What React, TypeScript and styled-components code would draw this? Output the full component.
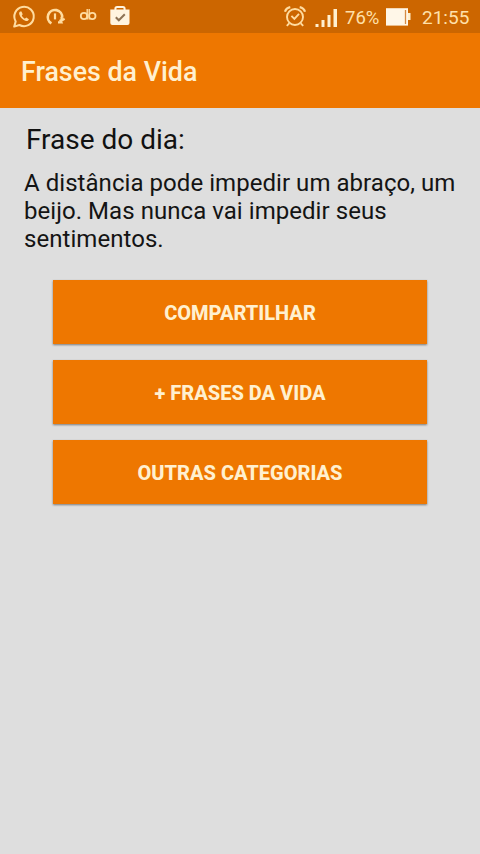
import React from "react";
import styled, { createGlobalStyle } from "styled-components";

const GlobalStyle = createGlobalStyle`
  * { box-sizing: border-box; }
  html, body { margin: 0; padding: 0; background: #dedede; }
  body { font-family: Roboto, "Liberation Sans", sans-serif; }
`;

const cream = "#fff0cf";

const Screen = styled.div`
  width: 100%;
  height: 854px;
  display: flex;
  flex-direction: column;
  background: #dedede;
  overflow: hidden;
`;

const StatusBar = styled.header`
  height: 33px;
  flex: none;
  display: flex;
  justify-content: space-between;
  background: #cc6600;
  color: #ffe0aa;
`;

const StatusIcons = styled.div`
  display: flex;
  height: 33px;
`;

const StatusText = styled.span<{ $width: number; $size: number }>`
  width: ${(p) => p.$width}px;
  font-size: ${(p) => p.$size}px;
  line-height: 36px;
  white-space: nowrap;
`;

const TitleBar = styled.div`
  height: 75px;
  flex: none;
  display: flex;
  align-items: center;
  padding: 3px 0 0 21px;
  background: #ee7700;
`;

const Title = styled.h1`
  margin: 0;
  font-size: 26.8px;
  line-height: 32px;
  font-weight: 500;
  color: ${cream};
`;

const Content = styled.main`
  display: flex;
  flex-direction: column;
  padding: 15px 12px 0 24px;
`;

const Heading = styled.h2`
  margin: 0 0 12px 2px;
  font-size: 28px;
  line-height: 34px;
  font-weight: 400;
  color: #111;
`;

const Quote = styled.p`
  margin: 0;
  font-size: 24px;
  line-height: 28px;
  letter-spacing: 0.05px;
  color: #141414;
`;

const Actions = styled.div`
  display: flex;
  flex-direction: column;
  gap: 16px;
  padding: 27px 41px 0 29px;
`;

const ActionButton = styled.button`
  height: 64px;
  padding: 2px 0 0;
  border: 0;
  background: #ee7700;
  box-shadow: 0 1px 2px rgba(0, 0, 0, 0.45);
  color: ${cream};
  font-family: inherit;
  font-size: 20px;
  line-height: 24px;
  font-weight: 800;
  text-transform: uppercase;
`;

const NotificationIcons = () => (
  <svg width="140" height="33" viewBox="0 0 140 33" fill="none" stroke="#ffdca0">
    <path d="M14.2 26.6l1.5-5.2a9.7 9.7 0 1 1 3.7 3.6z" strokeWidth="2" strokeLinejoin="round" />
    <path
      d="M20.2 11.4c-1 .6-1.3 1.7-.9 3.1 1.1 3.2 3.5 5.4 6.6 6.4 1.4.4 2.6-.3 3-1.7l-2.6-1.7-1.5 1.2c-1.4-.7-2.4-1.7-3-3.1l.9-1.3-1.2-2.8z"
      fill="#ffdca0"
      stroke="none"
    />
    <path d="M51.4 23.4A7.2 7.2 0 1 1 62.2 17.6" strokeWidth="2.6" />
    <path d="M55 13.4v6" strokeWidth="2.2" />
    <path d="M61.6 17v3.6l3-1.8M58 22.4h3.4l-1.4-2.8" strokeWidth="2.2" />
    <circle cx="84" cy="16" r="3.2" strokeWidth="1.8" />
    <circle cx="92.3" cy="16" r="3.2" strokeWidth="1.8" />
    <path d="M87.2 9v10.4M89.2 9v10.4" strokeWidth="1.4" />
    <path d="M115.4 10V8.7q0-1.7 1.7-1.7h5.8q1.7 0 1.7 1.7V10" stroke="#fff4df" strokeWidth="2" />
    <path d="M110.3 9.5h19.2V23q0 2-2 2h-15.2q-2 0-2-2z" fill="#fff4df" stroke="none" />
    <path d="M115.8 17.3l3 3 6-6" stroke="#8d7355" strokeWidth="2" />
  </svg>
);

const AlarmIcon = () => (
  <svg width="28" height="33" viewBox="1 0 28 33" fill="none" stroke="#ffdca0" strokeWidth="1.9">
    <circle cx="12" cy="17" r="8" />
    <path d="M2 11.8Q3 8 7.3 7.1M16.7 7.1Q21 8 22 11.8" strokeWidth="2.2" />
    <path d="M6.2 23.4l-2.4 2.5M17.8 23.4l2.4 2.5M8.4 15.8l3 3 4.6-5" />
  </svg>
);

const SignalIcon = () => (
  <svg width="33" height="33" viewBox="0 0 33 33" fill="#fff0cf">
    <path d="M3.5 24h3v3h-3zM9.5 20h3v7h-3zM15.5 15h3v12h-3zM21.5 9h3.5v18h-3.5z" />
  </svg>
);

const BatteryIcon = () => (
  <svg width="36" height="33" viewBox="1 0 36 33" fill="none">
    <path d="M1 8.2h22v17.4H1z" fill="#fff7e8" />
    <path d="M20.5 10v14" stroke="#d68b43" strokeWidth="1.3" />
    <path d="M23 13h2.5v7H23z" fill="#fff0cf" />
  </svg>
);

const actions = ["Compartilhar", "+ Frases da Vida", "Outras categorias"];

export default function App() {
  return (
    <>
      <GlobalStyle />
      <Screen>
        <StatusBar>
          <NotificationIcons />
          <StatusIcons>
            <AlarmIcon />
            <SignalIcon />
            <StatusText $width={41} $size={18.5}>76%</StatusText>
            <BatteryIcon />
            <StatusText $width={58} $size={19}>21:55</StatusText>
          </StatusIcons>
        </StatusBar>
        <TitleBar>
          <Title>Frases da Vida</Title>
        </TitleBar>
        <Content>
          <Heading>Frase do dia:</Heading>
          <Quote>A distância pode impedir um abraço, um beijo. Mas nunca vai impedir seus sentimentos.</Quote>
          <Actions>
            {actions.map((label) => (
              <ActionButton key={label}>{label}</ActionButton>
            ))}
          </Actions>
        </Content>
      </Screen>
    </>
  );
}
